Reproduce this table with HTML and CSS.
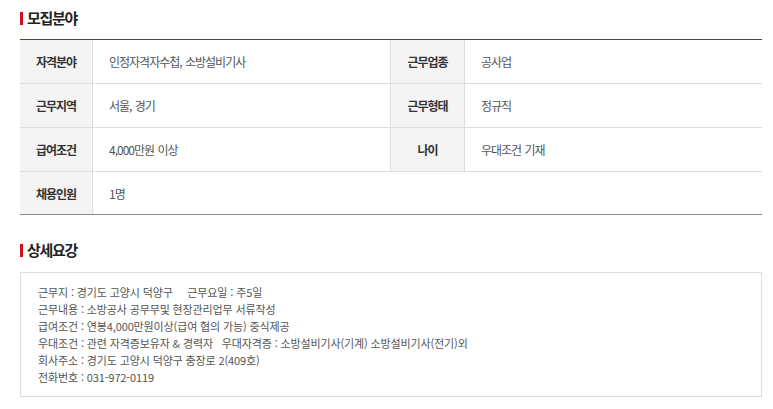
FILE: index.html
```html
<!DOCTYPE html>
<html lang="ko">
<head>
<meta charset="utf-8">
<link rel="stylesheet" href="styles.css">
</head>
<body>
<div class="page">
  <h2 class="sec-title">모집분야</h2>
  <div class="info-table">
    <div class="th">자격분야</div>
    <div class="td">인정자격자수첩, 소방설비기사</div>
    <div class="th th-right">근무업종</div>
    <div class="td">공사업</div>

    <div class="th">근무지역</div>
    <div class="td">서울, 경기</div>
    <div class="th th-right">근무형태</div>
    <div class="td">정규직</div>

    <div class="th">급여조건</div>
    <div class="td">4,000만원 이상</div>
    <div class="th th-right">나이</div>
    <div class="td">우대조건 기재</div>

    <div class="th last">채용인원</div>
    <div class="td last">1명</div>
    <div class="empty last"></div>
  </div>

  <h2 class="sec-title sec-title-2">상세요강</h2>
  <div class="detail-box">
    <p>근무지 : 경기도 고양시 덕양구&nbsp;&nbsp;&nbsp;&nbsp; 근무요일 : 주5일</p>
    <p>근무내용 : 소방공사 공무무및 현장관리업무 서류작성</p>
    <p>급여조건 : 연봉4,000만원이상(급여 협의 가능) 중식제공</p>
    <p>우대조건 : 관련 자격증보유자 &amp; 경력자&nbsp;&nbsp; 우대자격증 : 소방설비기사(기계) 소방설비기사(전기)외</p>
    <p>회사주소 : 경기도 고양시 덕양구 충장로 2(409호)</p>
    <p>전화번호 : 031-972-0119</p>
  </div>
</div>
</body>
</html>
```

FILE: styles.css
```css
* { box-sizing: border-box; }
html, body {
  margin: 0;
  padding: 0;
  background: #fff;
}
body {
  font-family: "Noto Sans CJK KR", "Noto Sans", sans-serif;
  color: #333;
}
.page {
  width: 742px;
  margin-left: 20px;
  padding-top: 8px;
}
.sec-title {
  margin: 0 0 11px 0;
  height: 20px;
  line-height: 20px;
  font-size: 15px;
  font-weight: 700;
  letter-spacing: -1.3px;
  color: #222;
  display: flex;
  align-items: center;
}
.sec-title::before {
  content: "";
  display: block;
  width: 3px;
  height: 13px;
  background: #d0111b;
  margin-right: 4px;
}
.sec-title-2 {
  margin-top: 25px;
  margin-bottom: 12px;
}
.info-table {
  display: grid;
  grid-template-columns: 73px 297px 75px 297px;
  grid-template-rows: 44px 44px 44px 42px;
  border-top: 1px solid #3d4376;
  border-bottom: 1px solid #8a8a8e;
  font-size: 12px;
  letter-spacing: -1px;
  word-spacing: 1px;
}
.th, .td {
  display: flex;
  align-items: center;
  border-bottom: 1px solid #dddddd;
}
.th {
  justify-content: center;
  background: #f4f4f4;
  font-weight: 700;
  color: #333;
  border-right: 1px solid #dddddd;
}
.th-right {
  border-left: 1px solid #dddddd;
}
.td {
  padding-left: 16px;
  color: #555;
}
.last {
  border-bottom: none;
}
.empty {
  grid-column: span 2;
}
.detail-box {
  border: 1px solid #dddddd;
  padding: 11px 17px 10px 17px;
  font-size: 11px;
  line-height: 17px;
  letter-spacing: -0.13px;
  color: #555;
}
.detail-box p {
  margin: 0;
  white-space: nowrap;
}
```
